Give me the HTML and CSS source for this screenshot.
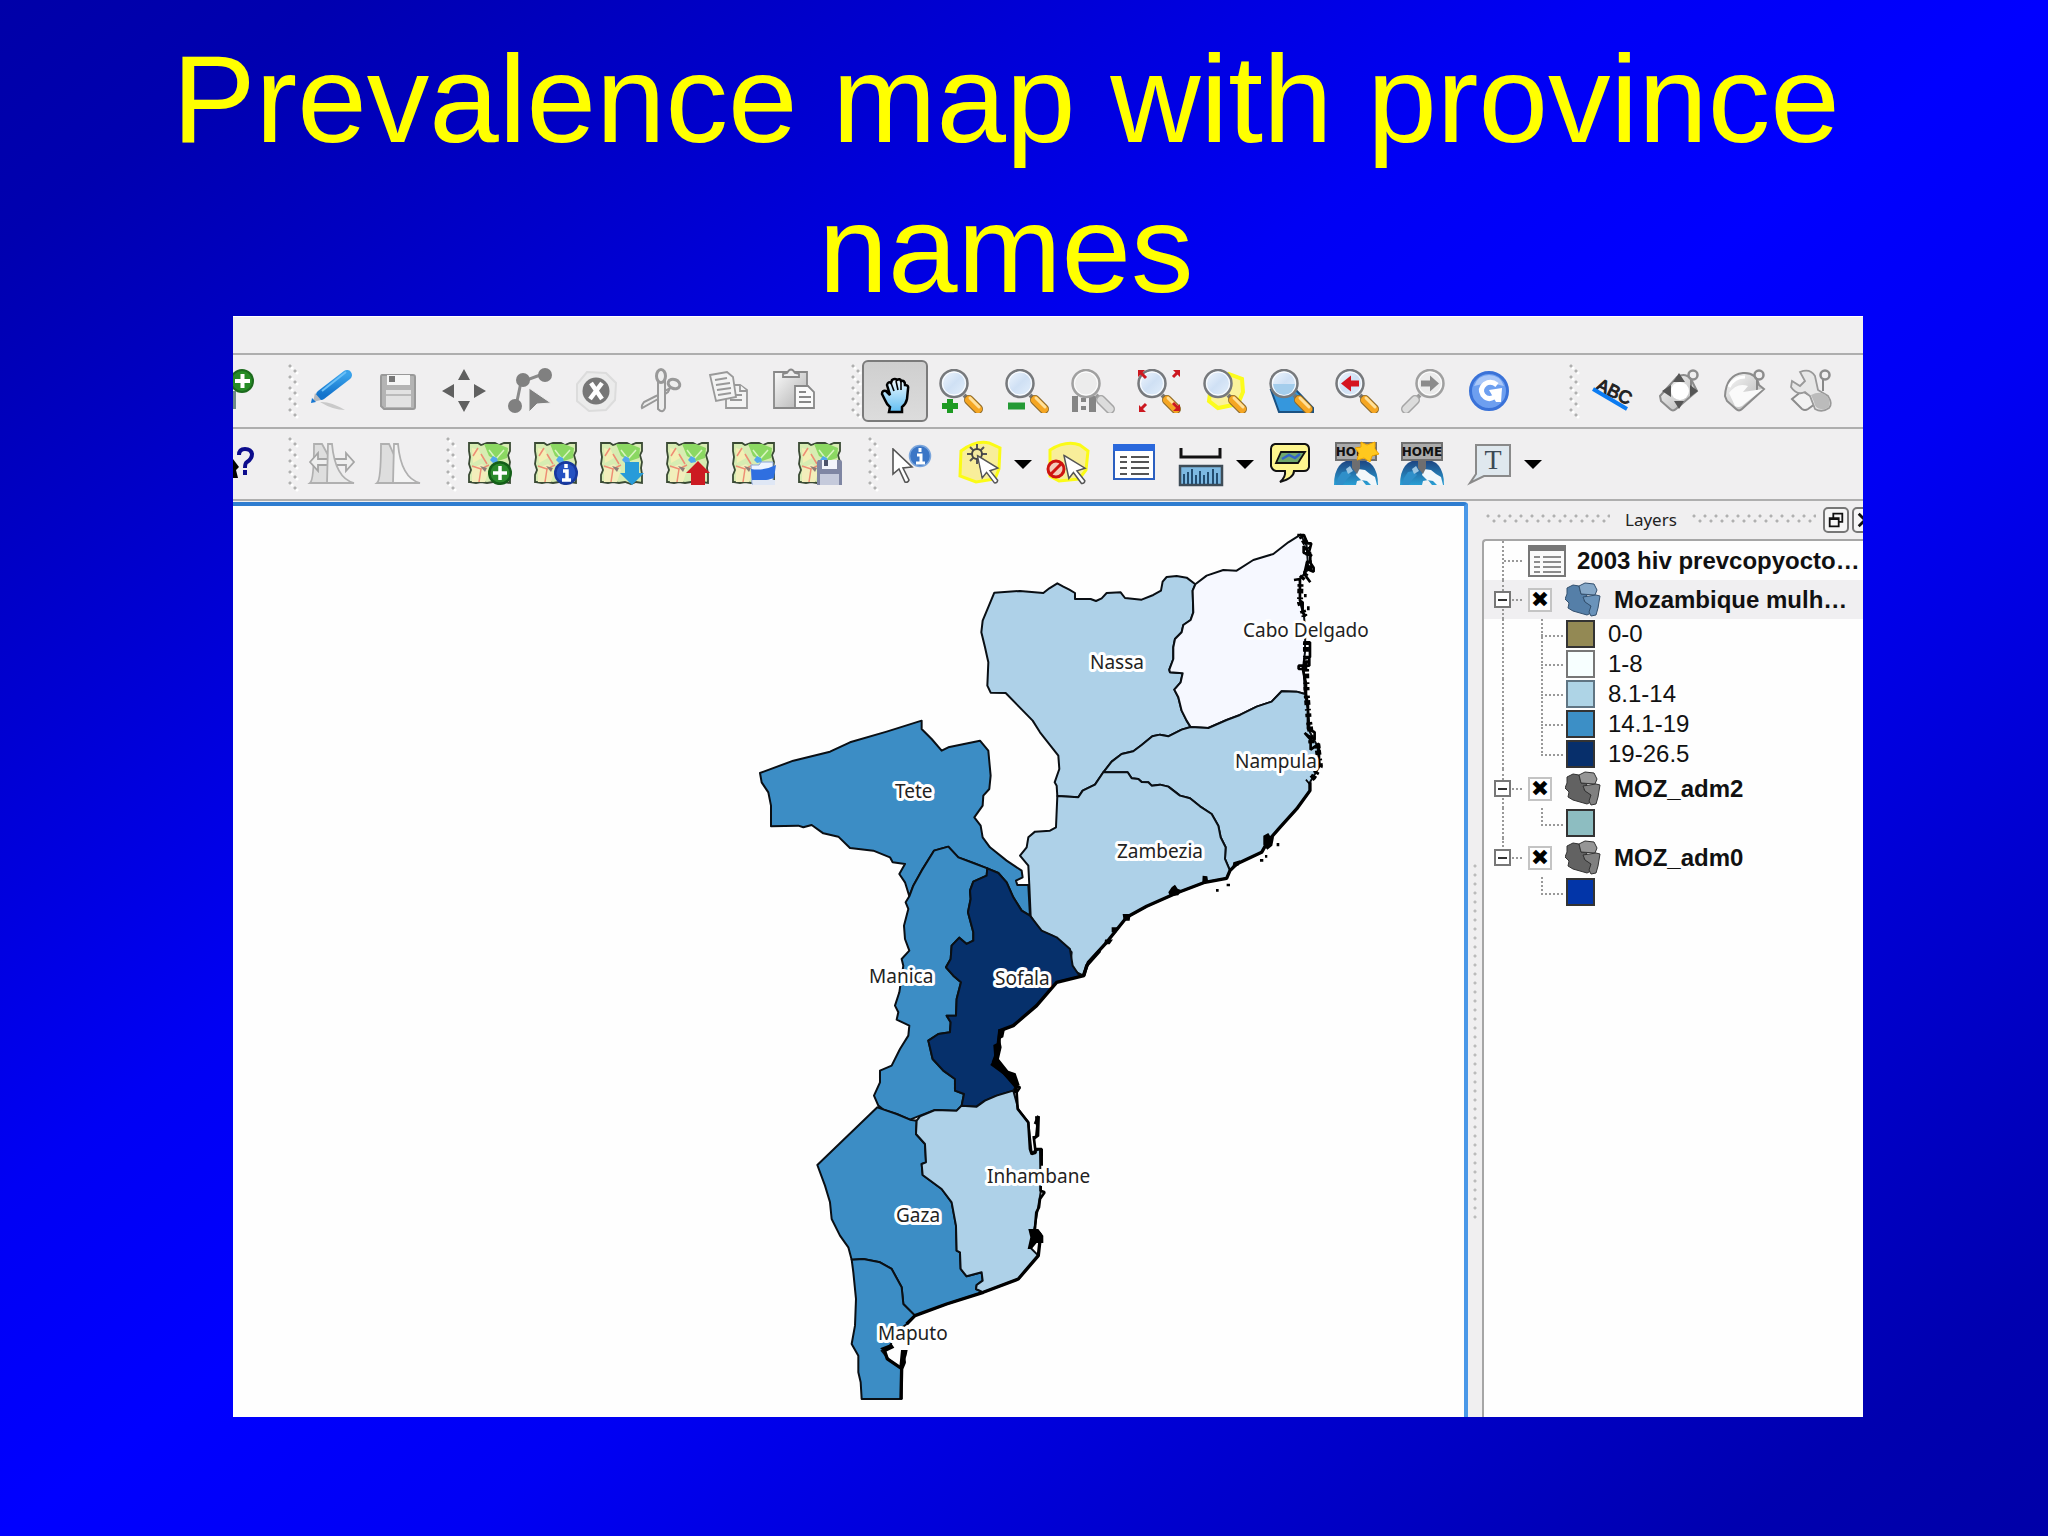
FILE: index.html
```html
<!DOCTYPE html>
<html lang="en">
<head>
<meta charset="utf-8">
<title>Prevalence map with province names</title>
<link rel="stylesheet" href="styles.css">
</head>
<body>
<svg class="defs" aria-hidden="true">
  <defs>
    <linearGradient id="lens" x1="0" y1="0" x2="1" y2="1"><stop offset="0" stop-color="#f4f9ff"/><stop offset=".5" stop-color="#cfe0f4"/><stop offset="1" stop-color="#e6f1fc"/></linearGradient>
    <linearGradient id="grayfill" x1="0" y1="0" x2="1" y2="1"><stop offset="0" stop-color="#fafafa"/><stop offset="1" stop-color="#b0b0b0"/></linearGradient>
    <linearGradient id="bluefill" x1="0" y1="0" x2="0" y2="1"><stop offset="0" stop-color="#3aa2ea"/><stop offset="1" stop-color="#1273cc"/></linearGradient>
    <linearGradient id="handfill" x1="0" y1="0" x2="0" y2="1"><stop offset="0" stop-color="#f2fbff"/><stop offset="1" stop-color="#5fbdf2"/></linearGradient>
    <linearGradient id="globe" x1="0" y1="0" x2="0" y2="1"><stop offset="0" stop-color="#1c3f7c"/><stop offset="1" stop-color="#2a9fd4"/></linearGradient>
    <symbol id="lensbody" viewBox="0 0 44 44">
      <path d="M25 26l4 4" stroke="#777" stroke-width="4"/>
      <path d="M30 31l9 9" stroke="#8c6a2c" stroke-width="10" stroke-linecap="round"/>
      <path d="M30 31l9 9" stroke="#f5a623" stroke-width="8" stroke-linecap="round"/>
      <path d="M31 29l9 9" stroke="#ffe09a" stroke-width="3" stroke-linecap="round"/>
      <circle cx="15" cy="14.500" r="13.500" fill="url(#lens)" stroke="#77797c" stroke-width="2.500"/>
      <circle cx="15" cy="14.500" r="11.500" fill="none" stroke="#fff" stroke-width="1"/>
    </symbol>
    <symbol id="lensgray" viewBox="0 0 44 44">
      <path d="M25 26l4 4" stroke="#999" stroke-width="4"/>
      <path d="M30 31l9 9" stroke="#a5a5a5" stroke-width="10" stroke-linecap="round"/>
      <path d="M30 31l9 9" stroke="#dcdcdc" stroke-width="7" stroke-linecap="round"/>
      <circle cx="15" cy="14.500" r="13.500" fill="#ececec" stroke="#a0a0a0" stroke-width="2.500"/>
      <circle cx="15" cy="14.500" r="11.500" fill="none" stroke="#fff" stroke-width="1"/>
    </symbol>
    <symbol id="mapsheet" viewBox="0 0 44 44">
      <path d="M1 1h9l3 2 6-2h8l4 2 5-2h6v8l-2 4 2 7-1 6 1 6v9l-6-1-5 2-6-2-6 1-6-1-5 1-6-1H1v-7l2-5-2-6 1-7-1-6z" fill="#d7ecb2" stroke="#3a4a34" stroke-width="1.800"/>
      <path d="M16 2h14l10 4-1 10-9 3-9-5z" fill="#8bd862"/>
      <path d="M4 6l7 2 3 8-9 5z" fill="#f3efb4"/><path d="M4 26l10-4 7 6-4 12H4z" fill="#f2eebb"/>
      <path d="M5 14l5-8M4 24l9 3 8-4M13 27l-2 13M13 12l6 10" stroke="#ee8d74" stroke-width="1.500" fill="none"/>
      <path d="M14 26l6 4M21 8l7 9M28 17l8-9" stroke="#d8f5c0" stroke-width="1.500" fill="none"/>
      <path d="M22 18l3-4 4 2 1 4-5 1z" fill="#52a8ee"/><path d="M12 24l7 2-2 4z" fill="#8e7b76"/>
    </symbol>
    <symbol id="pointer" viewBox="0 0 24 36">
      <path d="M1 1v25l6-5 6 13q3 1 4-2l-6-12 9-1z" fill="#fff" stroke="#555" stroke-width="1.600"/>
    </symbol>
    <symbol id="homeglobe" viewBox="0 0 44 44">
      <path d="M0 43Q0 17 22 17t22 26z" fill="url(#globe)"/>
      <path d="M4 36l4-6 6-1 3 4-5 5-3 5H2z" fill="#2f8fc9"/>
      <path d="M24 27l7 1 5 4 5 3 2 8h-6l-4-4-6-1-5-5z" fill="#f2f7fa"/>
      <path d="M22 43l1-4 5-1 4 5z" fill="#f2f2f2"/><path d="M12 27l4-3 3 5-5 3z" fill="#9cc6e2"/>
      <path d="M18 16h8v10l-3 6-5-6z" fill="#6e6e70"/>
      <rect x="2" y="1" width="40" height="17" fill="#ababab" stroke="#707070" stroke-width="2"/>
      <text x="22" y="14" text-anchor="middle" class="home-text">HOME</text>
    </symbol>
    <symbol id="tagring" viewBox="0 0 44 44">
      <path d="M34 10v12" stroke="#888" stroke-width="2"/>
      <circle cx="36" cy="6" r="4.500" fill="none" stroke="#8c8c8c" stroke-width="2.500"/>
    </symbol>
    <symbol id="africa" viewBox="0 0 36 36">
      <path d="M2 6l6-3 6 1 2 8 6 1-3 6 7 5v7l-4 2-14-4-5-3 1-5-4-4 2-5z" class="part-a"/>
      <path d="M14 4l6-3 9 1 3 6-2 5-14-1z" class="part-b"/>
      <path d="M18 15l13-2 4 1-2 12-2 7-5 1-2-4 2-6-6-4z" class="part-c"/>
    </symbol>
  </defs>
</svg>

<main class="slide">
  <h1 class="slide-title">Prevalence map with province names</h1>

  <section class="app" aria-label="Map application">
    <div class="menu-strip"></div>

    <div class="toolbar" role="toolbar" aria-label="Editing and navigation">
      <button class="tool tool-cut" aria-label="Add layer"><svg viewBox="0 0 22 44"><path d="M0 22h3v18H0z" fill="#6f8c87"/><circle cx="9" cy="12" r="12" fill="#1c6a1d"/><circle cx="9" cy="12" r="10" fill="#268c26"/><path d="M2 12h15M9.500 5v14" stroke="#fff" stroke-width="4"/></svg></button>
      <span class="grip"></span>
      <button class="tool" aria-label="Toggle editing"><svg viewBox="0 0 44 44"><path d="M10 33q10-1 25 8-12 0-25-8z" fill="#c9c9c9"/><path d="M11 26L37 6" stroke="url(#bluefill)" stroke-width="10" stroke-linecap="round"/><path d="M12 22L36 3" stroke="#6cc0f7" stroke-width="2"/><path d="M5 24l6 7-8 2z" fill="#b4b8bd"/><path d="M2 29l4 4-5 1z" fill="#1677d2"/></svg></button>
      <button class="tool" aria-label="Save edits"><svg viewBox="0 0 44 44"><path d="M6 6h31q2 0 2 2v30q0 2-2 2H8l-3-3V8q0-2 1-2z" fill="#b4b4b4" stroke="#999" stroke-width="2"/><path d="M11 6h23v10H11z" fill="#f6f6f6"/><path d="M13 7h6v6h-6z" fill="#777"/><path d="M10 21h25v17H10z" fill="#e2e2e2"/><path d="M10 26h25" stroke="#bbb" stroke-width="2"/></svg></button>
      <button class="tool" aria-label="Move feature"><svg viewBox="0 0 44 44" fill="#606060"><path d="M22 0l6 11H16zM22 43l6-11H16zM0 22l12-7v14zM44 22l-12-7v14z"/></svg></button>
      <button class="tool" aria-label="Node tool"><svg viewBox="0 0 44 44" fill="#808080"><path d="M8 37l5-24 22-8" fill="none" stroke="#8a8a8a" stroke-width="3"/><circle cx="15" cy="11" r="7"/><circle cx="37" cy="6" r="7"/><circle cx="7" cy="37" r="7"/><path d="M21 19v24l8-8 14-1z" stroke="#eee"/></svg></button>
      <button class="tool" aria-label="Delete selected"><svg viewBox="0 0 44 44"><path d="M13 3l19 1 10 10-1 17-9 10-17 1L3 32V15z" fill="#ebebeb" stroke="#dcdcdc" stroke-width="2"/><circle cx="22" cy="22" r="13.500" fill="#777"/><path d="M17 14l11 16M28 14L16 30" stroke="#fff" stroke-width="4.500"/></svg></button>
      <button class="tool" aria-label="Cut features"><svg viewBox="0 0 44 44" stroke="#999" stroke-width="2"><path d="M30 19L16 27 4 33q-3 4-2 6l16-9 10-7z" fill="#ededed"/><path d="M18 12h7v27q-2 6-7 1z" fill="#ededed"/><ellipse cx="21" cy="7" rx="4.500" ry="6.500" fill="#eee" stroke-width="3"/><ellipse cx="34" cy="15" rx="6" ry="4.500" fill="#eee" stroke-width="3" transform="rotate(20 34 15)"/></svg></button>
      <button class="tool" aria-label="Copy features"><svg viewBox="0 0 44 44" fill="#f3f3f3" stroke="#999" stroke-width="1.800"><path d="M20 16h14l7 5v18H20z" fill="#f3f3f3"/><path d="M34 16v6h7M24 26h12M24 31h12"/><path d="M4 6l17-3 6 5 3 20-20 4z" fill="#f3f3f3"/><path d="M9 11l12-2M10 16l14-2M11 21l14-2M12 26l13-2"/></svg></button>
      <button class="tool" aria-label="Paste features"><svg viewBox="0 0 44 44" stroke="#888" stroke-width="1.800"><path d="M2 3h33v36H2z" fill="url(#grayfill)"/><path d="M11 8V5l4-1q4-7 8 0l4 1v3z" fill="#eee"/><path d="M23 17h13l6 6v16H23z" fill="#fafafa"/><path d="M27 23h7M27 28h12M27 33h12" fill="none"/></svg></button>
      <span class="grip grip-far"></span>
      <button class="tool tool-active" aria-label="Pan map" aria-pressed="true"><svg viewBox="0 0 44 44"><path d="M16 43l1-5q-3-2-5-7l-3-6q0-4 4-3l4 4-3-10q1-4 4-2l1-3q3-2 5 0 3-2 4 1 4-1 4 4 4 0 3 4l-1 10q-1 5-5 8v5z" fill="url(#handfill)" stroke="#000" stroke-width="2.500"/><path d="M18 14l3 8M23 12l2 9M28 13v8" stroke="#000" stroke-width="1.600"/></svg></button>
      <button class="tool" aria-label="Zoom in"><svg viewBox="0 0 44 44"><use href="#lensbody"/><path d="M11 30v14M3 37h16" stroke="#1d9a22" stroke-width="6"/></svg></button>
      <button class="tool" aria-label="Zoom out"><svg viewBox="0 0 44 44"><use href="#lensbody"/><path d="M3 37h17" stroke="#249a35" stroke-width="7"/></svg></button>
      <button class="tool" aria-label="Zoom to native resolution"><svg viewBox="0 0 44 44"><path d="M1 27h6v16H1zM18 27h7v16h-7zM10 29h5v4h-5zM10 37h5v4h-5z" fill="#858585"/><use href="#lensgray"/></svg></button>
      <button class="tool" aria-label="Zoom full"><svg viewBox="0 0 44 44"><use href="#lensbody"/><path d="M3 3l6 6M42 2l-6 6M3 41l6-6M36 34l6 6" stroke="#cc1820" stroke-width="3"/><path d="M1 1h7l-7 7zM43 1v7l-7-7zM2 43v-7l7 7zM43 42h-7l7-7z" fill="#cc1820"/></svg></button>
      <button class="tool" aria-label="Zoom to selection"><svg viewBox="0 0 44 44"><path d="M26 5l13 5 1 13-5 12-20 4-9-7 1-8z" fill="#fbf29c" stroke="#fcfc1c" stroke-width="4"/><use href="#lensbody"/></svg></button>
      <button class="tool" aria-label="Zoom to layer"><svg viewBox="0 0 44 44"><path d="M2 21l8 22h34V39L26 20z" fill="#3597dd" stroke="#1a5182" stroke-width="2"/><use href="#lensbody"/><path d="M4 15h22q-1 10-11 11Q5 25 4 15z" fill="#a4cdec"/></svg></button>
      <button class="tool" aria-label="Zoom last"><svg viewBox="0 0 44 44"><use href="#lensbody"/><path d="M6 14.500l10-8v5h8v6h-8v5z" fill="#d51320"/></svg></button>
      <button class="tool" aria-label="Zoom next"><svg viewBox="0 0 44 44"><g transform="matrix(-1 0 0 1 44 0)"><use href="#lensgray"/></g><path d="M38 14.500l-9-8v5h-9v6h9v5z" fill="#8b8b8b"/></svg></button>
      <button class="tool" aria-label="Refresh"><svg viewBox="0 0 44 44"><circle cx="22" cy="22" r="18.500" fill="#6d9ff0" stroke="#3a72d8" stroke-width="3"/><path d="M7 17q4-11 15-11t15 11q-15-5-30 0z" fill="#a9c7f8"/><path d="M30 16q-6-5-12-1-6 5-2 11 5 6 11 2" fill="none" stroke="#fff" stroke-width="5"/><path d="M22 21l13-2-1 14h-5z" fill="#fff"/></svg></button>
      <span class="grip grip-wide"></span>
      <button class="tool" aria-label="Labeling"><svg viewBox="0 0 44 44"><text x="4" y="20" class="abc-text" transform="rotate(26 4 20)">ABC</text><path d="M2 20l34 20" stroke="#0c7cf2" stroke-width="4"/></svg></button>
      <button class="tool" aria-label="Move label"><svg viewBox="0 0 44 44"><path d="M3 27L20 8q8-5 14 2l6 12-21 18q-3 3-6 0L4 32z" fill="url(#grayfill)" stroke="#8c8c8c" stroke-width="2"/><use href="#tagring"/><circle cx="23" cy="22" r="9" fill="#fff"/><path d="M22 4l6 9H16zM22 40l5-8H17zM5 22l9-6v12zM41 22l-8-6v12z" fill="#555"/></svg></button>
      <button class="tool" aria-label="Rotate label"><svg viewBox="0 0 44 44"><path d="M2 27Q3 6 20 4q13-1 16 12l5 4-22 20q-3 3-6 0L4 32z" fill="url(#grayfill)" stroke="#8c8c8c" stroke-width="2"/><use href="#tagring"/><path d="M6 24q8-11 19-7l-5 6 20-3-21 17q-4 2-7 0z" fill="#fafafa"/><path d="M6 18q5-10 16-10" fill="none" stroke="#fff" stroke-width="3"/></svg></button>
      <button class="tool" aria-label="Change label"><svg viewBox="0 0 44 44"><path d="M3 30l10-8 17 10-11 8q-3 2-6 0z" fill="#f2f2f2" stroke="#8c8c8c" stroke-width="2"/><use href="#tagring"/><path d="M11 3q10-4 15 4l3 14 10 6q5 8 1 12-7 5-14 1l-5-13-5-4Q8 27 2 18l1-6 8 5 5-5z" fill="#e7e7e7" stroke="#999" stroke-width="1.800"/><path d="M22 26q12-6 18 4 3 11-8 10-6 0-7-7z" fill="#bbb"/></svg></button>
    </div>

    <div class="toolbar toolbar-low" role="toolbar" aria-label="Layers and attributes">
      <button class="tool tool-cut" aria-label="What's this?"><svg viewBox="0 0 22 44"><path d="M0 17l6 8-3 3 2 8H0z" fill="#000"/><path d="M6 13q0-6 6-6t7 5q0 5-5 8-2 1-2 6M12 28v5" fill="none" stroke="#0c0c8c" stroke-width="4"/></svg></button>
      <span class="grip"></span>
      <button class="tool" aria-label="Stretch histogram"><svg viewBox="0 0 44 44" stroke="#b0b0b0" stroke-width="1.800"><path d="M0 41q4-3 4-39h8l6 11V41z" fill="#dedede"/><path d="M0 20l8-9v6h28v-6l8 9-8 9v-6H8v6z" fill="#efefef" stroke="#a5a5a5"/><path d="M17 41l1-39h4q3 34 22 39z" fill="#ebebeb"/></svg></button>
      <button class="tool" aria-label="Full histogram"><svg viewBox="0 0 44 44" stroke="#b0b0b0" stroke-width="1.800"><path d="M1 41q4-3 4-39h8l5 11V41z" fill="#dedede"/><path d="M17 41l1-39h4q3 34 22 39z" fill="#f4f4f4"/></svg></button>
      <span class="grip grip-near"></span>
      <button class="tool" aria-label="New map view"><svg viewBox="0 0 44 44"><use href="#mapsheet"/><circle cx="32" cy="31" r="12" fill="#145f18"/><circle cx="32" cy="31" r="9.500" fill="#2a8a2a"/><path d="M25 31h14M32 24v14" stroke="#fff" stroke-width="3.500"/></svg></button>
      <button class="tool" aria-label="Map information"><svg viewBox="0 0 44 44"><use href="#mapsheet"/><circle cx="32" cy="31" r="12" fill="#17379d"/><circle cx="32" cy="31" r="9.500" fill="#2551c2"/><path d="M32 22v4M29 29h4v9M28 38h9" stroke="#fff" stroke-width="3.500" fill="none"/></svg></button>
      <button class="tool" aria-label="Download map"><svg viewBox="0 0 44 44"><use href="#mapsheet"/><path d="M25 20h14v11h5L32 43 20 31h5z" fill="#279bd9"/></svg></button>
      <button class="tool" aria-label="Upload map"><svg viewBox="0 0 44 44"><use href="#mapsheet"/><path d="M25 43h14V31h5L32 19 20 31h5z" fill="#cc1b22"/></svg></button>
      <button class="tool" aria-label="Open map"><svg viewBox="0 0 44 44"><use href="#mapsheet"/><path d="M19 23h8l2-3h12v22H20z" fill="#eef4ff" stroke="#8aa5da"/><path d="M19 27q13 2 25-4l-2 13q-10 4-22 2z" fill="#2f6fe0"/><path d="M21 38h22v5H21z" fill="#dfe7f5"/></svg></button>
      <button class="tool" aria-label="Save map"><svg viewBox="0 0 44 44"><use href="#mapsheet"/><path d="M20 18h22q2 0 2 2v23H19V20z" fill="#7f86a3"/><path d="M24 18h15v9H24z" fill="#f2f4fb"/><path d="M26 18h4v6h-4z" fill="#4d536b"/><path d="M22 32h19v11H22z" fill="#c5cadb"/></svg></button>
      <span class="grip grip-near"></span>
      <button class="tool" aria-label="Identify features"><svg viewBox="0 0 44 44"><use href="#pointer" x="2" y="6" width="24" height="36"/><circle cx="30" cy="14" r="10.500" fill="#3b76c6" stroke="#7aa5dc" stroke-width="1.500"/><path d="M30 6v4M27 13h4v8M26 21h9" stroke="#fff" stroke-width="3" fill="none"/></svg></button>
      <button class="tool" aria-label="Select features"><svg viewBox="0 0 44 44"><path d="M5 9Q20-2 33 1l11 5-1 21-4 10-19 3-16-6z" fill="#f8ee9a" stroke="#fbfb16" stroke-width="3"/><path d="M21 2v20M11 12h20M14 5l14 14M28 5L14 19" stroke="#555" stroke-width="2"/><circle cx="21" cy="12" r="5" fill="#f3e9a0" stroke="#444" stroke-width="2"/><use href="#pointer" transform="rotate(-12 30 20)" x="22" y="11" width="22" height="33"/></svg></button>
      <button class="drop" aria-label="Selection options"></button>
      <button class="tool" aria-label="Deselect features"><svg viewBox="0 0 44 44"><path d="M4 8Q20-2 34 3l8 6-2 19-7 9-20 2-9-5z" fill="#f8ee9a" stroke="#fbfb16" stroke-width="3"/><use href="#pointer" transform="rotate(-12 30 20)" x="18" y="10" width="24" height="34"/><circle cx="10" cy="27" r="8" fill="#f3cdbb" stroke="#cf1410" stroke-width="3"/><path d="M5 32l11-11" stroke="#cf1410" stroke-width="3"/></svg></button>
      <button class="tool" aria-label="Open attribute table"><svg viewBox="0 0 44 44"><path d="M2 3h40v34H2z" fill="#fff" stroke="#2b5fc0" stroke-width="2"/><path d="M1 2h42v7H1z" fill="#2a68dc"/><path d="M8 15h7M8 20h7M8 26h7M8 32h7M19 15h18M19 20h18M19 26h18M19 32h18" stroke="#555" stroke-width="2"/></svg></button>
      <button class="tool" aria-label="Measure"><svg viewBox="0 0 44 44"><path d="M3 6v9h39V6" fill="none" stroke="#111" stroke-width="3"/><path d="M2 24h42v19H2z" fill="#7db9e2" stroke="#3e4c57" stroke-width="2.500"/><path d="M6 42V32M10 42V30M14 42V27M18 42V33M22 42V29M26 42V33M30 42V30M35 42V27M39 42V31" stroke="#234d70" stroke-width="2"/></svg></button>
      <button class="drop" aria-label="Measure options"></button>
      <button class="tool" aria-label="Map tips"><svg viewBox="0 0 44 44"><path d="M7 2h30q4 1 4 5v18q-1 4-5 4H26q0 7-14 11 6-5 5-11H8q-4-1-5-5V7q0-4 4-5z" fill="#fdf58e" stroke="#111" stroke-width="2"/><path d="M13 10h24l-7 11H8z" fill="#6fa76c" stroke="#111" stroke-width="1.800"/><path d="M14 17l7-4 6 3 5-4" stroke="#3265c8" stroke-width="2.500" fill="none"/></svg></button>
      <button class="tool" aria-label="New bookmark"><svg viewBox="0 0 44 44"><use href="#homeglobe"/><path d="M27 0l6 3 8-3v7l4 5-7 2-2 6-6-4-7 2 2-7-4-5 6-1z" fill="#ffc81e" stroke="#f0a400"/></svg></button>
      <button class="tool" aria-label="Show bookmarks"><svg viewBox="0 0 44 44"><use href="#homeglobe"/></svg></button>
      <button class="tool" aria-label="Text annotation"><svg viewBox="0 0 44 44"><path d="M10 3h34v31H18L4 41l6-9z" fill="#dfe8ee" stroke="#8a8a8a" stroke-width="2"/><text x="27" y="27" text-anchor="middle" class="note-text">T</text></svg></button>
      <button class="drop" aria-label="Annotation options"></button>
    </div>

    <div class="workspace">
      <div class="canvas">
        <svg class="map" viewBox="233 507 1231 911" role="img" aria-label="Map of Mozambique by province">
          <!-- northern provinces -->
          <g class="area" transform="translate(960 520) scale(.3333)">
            <path class="light" d="M103 221L180 216 250 222 268 208 292 193 310 203 328 212 345 222 345 240 392 240 408 246 425 238 440 222 482 220 495 237 545 242 580 228 603 215 608 188 620 174 650 171 680 176 706 196 698 215 700 280 692 303 670 318 665 340 645 360 640 385 640 420 628 452 630 460 668 463 662 490 643 512 655 535 665 575 680 605 692 624 665 632 625 652 600 647 577 652 545 678 520 697 485 705 455 728 430 760 405 797 368 815 355 835 292 831 290 800 284 790 298 750 295 710 240 640 218 605 137 522 92 521 82 500 85 430 75 385 64 340 68 305Z"/>
            <path class="pale" d="M706 196L740 170 790 153 830 155 880 123 940 105 985 70 1022 47 1040 80 1045 150 1020 180 1020 250 1032 290 1036 340 1035 400 1030 440 1035 525 1010 518 965 517 935 548 890 563 840 588 800 603 745 627 692 624 680 605 665 575 655 535 643 512 662 490 668 463 630 460 628 452 640 420 640 385 645 360 665 340 670 318 692 303 700 280 698 215Z"/>
            <path class="light" d="M692 624L745 627 800 603 840 588 890 563 935 548 965 517 1010 518 1035 525 1045 580 1050 640 1072 680 1080 740 1050 790 1050 815 1010 870 960 925 925 965 905 1000 830 1035 810 1055 795 1020 797 985 782 955 775 920 755 885 720 862 690 838 660 830 625 803 600 797 575 800 565 790 545 789 535 780 515 778 503 760 430 760 455 728 485 705 520 697 545 678 577 652 600 647 625 652 665 632Z"/>
            <path class="light" d="M292 831L355 835 368 815 405 797 430 760 503 760 515 778 535 780 545 789 565 790 575 800 600 797 625 803 660 830 690 838 720 862 755 885 775 920 782 955 797 985 795 1020 810 1055 800 1078 735 1090 650 1122 560 1162 500 1195 440 1270 385 1330 370 1370 340 1355 332 1330 335 1300 325 1290 280 1252 240 1235 212 1192 208 1100 205 1040 180 1010 200 985 205 955 225 938 270 935 288 925Z"/>
          </g>
          <!-- central provinces -->
          <g class="area" transform="translate(740 700) scale(.3333)">
            <path class="mid" d="M60 222L160 185 270 158 330 130 440 98 545 65 545 90 575 120 605 155 625 145 720 125 745 155 752 230 748 270 730 290 728 320 703 355 722 380 728 415 750 445 800 485 845 515 848 535 828 545 832 558 865 558 870 650 845 635 820 595 800 550 775 522 742 508 700 492 655 475 625 443 582 455 545 515 520 560 508 592 495 550 478 525 495 495 458 490 450 475 400 455 330 447 295 413 250 403 215 378 190 385 175 380 93 382 93 320 85 280 65 250Z"/>
            <path class="mid" d="M508 592L520 560 545 515 582 455 625 443 655 475 700 492 742 508 740 530 700 548 690 575 692 600 684 640 700 700 700 725 680 735 658 716 635 740 632 780 618 805 640 830 663 850 650 900 648 950 620 950 632 970 630 1000 595 1005 565 1025 578 1080 610 1115 645 1140 645 1175 672 1185 665 1220 650 1235 585 1233 540 1250 510 1262 470 1245 430 1232 415 1220 402 1190 420 1150 420 1115 455 1100 480 1050 505 1010 508 980 470 962 475 940 465 920 478 880 490 800 485 780 508 755 495 720 492 680 505 630 497 610Z"/>
            <path class="dark" d="M742 508L775 522 800 550 820 595 845 635 870 650 905 695 950 715 990 750 998 800 1015 825 1030 830 950 850 890 920 820 980 780 995 775 1050 760 1090 800 1130 830 1160 820 1175 770 1190 735 1205 710 1223 665 1220 672 1185 645 1175 645 1140 610 1115 578 1080 565 1025 595 1005 630 1000 632 970 620 950 648 950 650 900 663 850 640 830 618 805 632 780 635 740 658 716 680 735 700 725 700 700 684 640 692 600 690 575 700 548 740 530Z"/>
          </g>
          <!-- southern provinces -->
          <g class="area" transform="translate(800 1040) scale(.3333)">
            <path class="mid" d="M232 205L52 378 75 440 90 490 95 540 120 590 145 625 155 662 190 660 240 670 275 690 305 745 310 795 345 830 440 795 550 760 528 750 530 738 548 725 545 700 500 712 482 690 480 640 470 635 468 560 455 490 425 450 368 408 365 375 378 370 375 315 348 285 350 245 330 242 290 225Z"/>
            <path class="light" d="M350 245L360 232 405 213 470 215 485 200 530 203 555 185 590 170 640 155 655 210 685 250 695 340 720 330 722 460 705 560 690 625 715 650 655 720 550 760 528 750 530 738 548 725 545 700 500 712 482 690 480 640 470 635 468 560 455 490 425 450 368 408 365 375 378 370 375 315 348 285Z"/>
            <path class="mid" d="M155 662L190 660 240 670 275 690 305 745 310 795 345 830 320 855 290 880 270 920 245 935 265 960 305 990 305 1080 185 1080 182 1030 175 1000 175 950 155 915 165 860 168 780 160 700Z"/>
          </g>
          <!-- coastline -->
          <g class="coast">
            <g transform="translate(960 520) scale(.3333)">
              <path d="M1012 48h20l10 25h12l-8 30 10 8-25-10v-20l20 25v25l10 15v12l-20-8v-20l-8 35 18 25M1020 180l-18 3M1020 180v65l8 5v30l10 12M1036 225v10M1045 262v12M1030 370h20v45l-20 5M1048 415v25h-32v10h22v-22l-10 20 10 45M1038 490v35l6 35v70l20 10v22l-20-12-10-8 18 20v30l25-18v70h-10"/>
              <path class="ragged" d="M1024 50L1044 85 1048 150 1022 182 1020 250 1034 292M1038 370V440L1040 525 1046 600 1052 640 1055 685M1072 680L1080 742 1060 775 1040 792"/>
              <path class="thick" d="M1050 790V815L1010 870 960 925 925 965 905 1000 830 1035 810 1055 800 1078 735 1090 650 1122 560 1162 500 1195 440 1270 385 1330 370 1370"/>
              <path class="blob" d="M910 950l15-8 5 8 12 5-5 25-15 12-12-15zM635 1105l10-8 8 12 12 5-10 15-25 3-5-12zM488 1185h24l-3 20h-18zM455 1225h20l-5 15h-15zM728 1070l14 2 3 18h-18zM820 1030l20-6-3 15-20 8zM950 972h8v10h-8zM900 1020h10v8h-10zM800 1094h10v8h-10zM768 1110h8v8h-8zM915 1008h7v8h-7zM435 1262h24l-10 14h-16z"/>
            </g>
            <g transform="translate(740 700) scale(.3333)">
              <path class="thick" d="M1080 755l-40 45-8 30-82 20-60 70-70 60-40 15-5 55-15 40 40 40 30 30-4 22"/>
              <path class="blob" d="M775 990h20l-5 25-10 5 5 25-8 35 28 35 22 8 12 35-15 8-35-40-38-28 12-20-3-40 10-5z"/>
            </g>
            <g transform="translate(800 1040) scale(.3333)">
              <path d="M645 140l15 5-10 15 3 50 32 40 5 80 5 15 12-4-6-50M705 255l10-25M707 330h18v50M722 440v15l12 5-14 20-3 25-8 15-5 60"/>
              <path class="thick" d="M705 575l15 10v20l-5 45-60 70-105 40-110 35-95 35-25 25M252 930l10 30 42 28M308 935l5 35-8 20-2 90"/>
              <path class="blob" d="M685 570h30l15 20v22h-20l-15 18h-12l8-35zM705 232h15l-2 60-14 10 4-40zM240 928l35-14 8 12-25 12zM303 933h20l-3 15-12 38-10-2z"/>
            </g>
          </g>
          <g class="labels">
            <text x="895" y="799">Tete</text>
            <text x="869" y="984">Manica</text>
            <text x="995" y="986">Sofala</text>
            <text x="1090" y="670">Nassa</text>
            <text x="1243" y="638">Cabo Delgado</text>
            <text x="1235" y="769">Nampula</text>
            <text x="1117" y="859">Zambezia</text>
            <text x="987" y="1184">Inhambane</text>
            <text x="896" y="1223">Gaza</text>
            <text x="878" y="1341">Maputo</text>
          </g>
        </svg>
      </div>
      <div class="splitter"></div>
      <aside class="layers">
        <header class="layers-head">
          <span class="dots"></span>
          <h2 class="layers-title">Layers</h2>
          <span class="dots"></span>
          <button class="dock" aria-label="Float panel"><svg viewBox="0 0 20 20" fill="none" stroke="#111" stroke-width="2"><path d="M7 8V3h10v9h-4M6 3h12"/><path d="M3 8h10v9H3zM2 9h12"/></svg></button>
          <button class="dock" aria-label="Close panel"><svg viewBox="0 0 20 20" stroke="#111" stroke-width="3"><path d="M3 3l14 14M17 3L3 17"/></svg></button>
        </header>
        <ul class="tree">
          <li class="layer plain">
            <svg class="table-icon" viewBox="0 0 38 32"><path d="M1 1h36v30H1z" fill="#fafafa" stroke="#777" stroke-width="2"/><path d="M1 1h36v5H1z" fill="#777"/><path d="M6 12h6M6 17h6M6 22h6M6 27h6M15 12h18M15 17h18M15 22h18M15 27h18" stroke="#8c8c8c" stroke-width="2"/></svg>
            <span class="name">2003 hiv prevcopyocto…</span>
          </li>
          <li class="layer selected">
            <button class="fold" aria-label="Collapse"></button>
            <input class="tick" type="checkbox" id="l1" checked>
            <svg class="shape blue" viewBox="0 0 36 36"><use href="#africa"/></svg>
            <label class="name" for="l1">Mozambique mulh…</label>
          </li>
          <li class="class"><i class="swatch s1"></i>0-0</li>
          <li class="class"><i class="swatch s2"></i>1-8</li>
          <li class="class"><i class="swatch s3"></i>8.1-14</li>
          <li class="class"><i class="swatch s4"></i>14.1-19</li>
          <li class="class"><i class="swatch s5"></i>19-26.5</li>
          <li class="layer">
            <button class="fold" aria-label="Collapse"></button>
            <input class="tick" type="checkbox" id="l2" checked>
            <svg class="shape" viewBox="0 0 36 36"><use href="#africa"/></svg>
            <label class="name" for="l2">MOZ_adm2</label>
          </li>
          <li class="class"><i class="swatch s6"></i></li>
          <li class="layer end">
            <button class="fold" aria-label="Collapse"></button>
            <input class="tick" type="checkbox" id="l3" checked>
            <svg class="shape" viewBox="0 0 36 36"><use href="#africa"/></svg>
            <label class="name" for="l3">MOZ_adm0</label>
          </li>
          <li class="class end"><i class="swatch s7"></i></li>
        </ul>
      </aside>
    </div>
  </section>
</main>
</body>
</html>
```

FILE: styles.css
```css
* { box-sizing: border-box; }

body { margin: 0; }

button { appearance: none; margin: 0; padding: 0; border: 0; background: none; }

.defs { position: absolute; width: 0; height: 0; }

.slide {
  display: flex;
  flex-direction: column;
  min-height: 100vh;
  padding: 24px 185px 119px 233px;
  background: linear-gradient(to bottom right, #0000a8 0%, #0000b0 8%, #0000d2 24%, #0000f4 39%, #0000ff 50%, #0000f4 61%, #0000d2 76%, #0000b0 92%, #0000a8 100%);
}

.slide-title {
  margin: 0 -83px -8px -167px;
  color: #ffff00;
  font: 400 125px/150px "Liberation Sans", Arial, sans-serif;
  text-align: center;
}

/* application window */
.app {
  display: flex;
  flex: 1;
  flex-direction: column;
  overflow: hidden;
  background: #f0eff0;
}

.menu-strip { height: 37px; border-top: 1px solid #fff; }

.toolbar {
  display: flex;
  align-items: center;
  height: 74px;
  border-top: 2px solid #aeaeae;
  overflow: hidden;
}

.toolbar-low { height: 72px; }

.tool {
  display: flex;
  flex: none;
  align-items: center;
  justify-content: center;
  width: 66px;
  height: 62px;
}

.tool svg { display: block; width: 44px; height: 44px; overflow: visible; }
.tool svg:not([fill]) { fill: none; }

.tool-cut { justify-content: flex-start; width: 22px; }
.tool-cut svg { width: 22px; }

.tool-active {
  border: 2px solid #7b7b7b;
  border-radius: 6px;
  background: linear-gradient(#cfcfcf, #dcdcdc);
}

.grip {
  flex: none;
  width: 11px;
  height: 55px;
  margin-left: 33px;
  background:
    radial-gradient(circle at 2px 2px, #b0b0b0 1px, transparent 2px) 0 0 / 11px 11px,
    radial-gradient(circle at 4px 4px, #fff 1px, transparent 2px) 0 0 / 11px 11px,
    radial-gradient(circle at 7px 7px, #b0b0b0 1px, transparent 2px) 0 0 / 11px 11px,
    radial-gradient(circle at 9px 9px, #fff 1px, transparent 2px) 0 0 / 11px 11px;
}

.grip-far { margin-left: 24px; }
.grip-wide { margin-left: 47px; }
.grip-near { margin-left: 15px; }

.drop { flex: none; width: 24px; height: 40px; }
.drop::before {
  content: "";
  display: block;
  margin: 0 auto;
  width: 0;
  border: 9px solid transparent;
  border-top-color: #000;
  border-bottom-width: 0;
}

.home-text { fill: #111; font: 700 12px "DejaVu Sans", sans-serif; }
.abc-text { fill: #222; stroke: #222; font: 400 18px "Liberation Sans", sans-serif; }
.note-text { fill: #3c4a55; font: 400 28px "Liberation Serif", serif; }

/* map and layer panel */
.workspace {
  display: flex;
  flex: 1;
  padding-top: 1px;
  border-top: 2px solid #aeaeae;
}

.canvas {
  flex: 1;
  min-width: 0;
  border: solid #4a98e8;
  border-width: 4px 4px 0 0;
  border-top-color: #2f7dd0;
  border-top-right-radius: 4px;
  background: #fefefe;
}

.map { display: block; width: 100%; height: 100%; }

.area path { stroke: #0a0f14; stroke-width: 6; stroke-linejoin: round; }
.light { fill: #aed1e8; }
.pale { fill: #f6f8ff; }
.mid { fill: #3c8dc5; }
.dark { fill: #06306b; }

.coast path { fill: none; stroke: #000; stroke-width: 8; stroke-linejoin: bevel; }
.coast .thick { stroke-width: 10; }
.coast .ragged { stroke-width: 18; stroke-dasharray: 8 6 14 12 5 9 10 16; }
.coast .blob { fill: #000; stroke: none; }

.labels text {
  fill: #222;
  stroke: #fff;
  stroke-width: 6px;
  stroke-linejoin: round;
  paint-order: stroke;
  font: 400 19px "Noto Sans", Tahoma, sans-serif;
}

.splitter {
  width: 14px;
  padding: 360px 0 196px;
  background: radial-gradient(circle at 7px 4px, #bbb 1px, transparent 2px) 0 360px / 14px 9px repeat-y;
  background-clip: content-box;
}

.layers { display: flex; flex-direction: column; width: 381px; overflow: hidden; }

.layers-head {
  display: flex;
  align-items: center;
  width: 400px;
  height: 37px;
  padding: 0 0 2px 4px;
}

.dots {
  width: 124px;
  height: 11px;
  background:
    radial-gradient(circle at 2px 2px, #b0b0b0 1px, transparent 2px) 0 0 / 11px 11px,
    radial-gradient(circle at 8px 7px, #b0b0b0 1px, transparent 2px) 0 0 / 11px 11px;
}

.layers-title {
  margin: 0 15px;
  color: #222;
  font: 400 17px/24px "Noto Sans", Tahoma, sans-serif;
}

.dock {
  width: 26px;
  height: 26px;
  margin-left: 3px;
  padding: 2px;
  border: 2px solid #777;
  border-radius: 5px;
  background: #f6f6f6;
}
.layers-title + .dots + .dock { margin-left: 7px; }
.dock svg { display: block; width: 18px; height: 18px; }

.tree {
  flex: 1;
  margin: 0;
  padding: 0;
  border: solid #a6a6a6;
  border-width: 2px 0 0 2px;
  border-top-left-radius: 4px;
  background: #fefefe;
  color: #111;
  font: 400 24px/30px "Liberation Sans", Arial, sans-serif;
  list-style: none;
}

.layer, .class { position: relative; display: flex; align-items: center; white-space: nowrap; }
.layer { height: 39px; padding-left: 10px; font-weight: 700; }
.class { height: 30px; padding-left: 82px; }
.selected { background: #f0eff1; }
.plain { padding-left: 44px; }

/* dotted branch lines of the tree */
.layer::before, .class::before {
  content: "";
  position: absolute;
  top: 0;
  bottom: 0;
  left: 18px;
  border-left: 2px dotted #999;
}
.layer.end::before { bottom: 50%; }
.class.end::before { display: none; }
.layer::after {
  content: "";
  position: absolute;
  left: 20px;
  width: 18px;
  border-top: 2px dotted #999;
}
.class::after {
  content: "";
  position: absolute;
  top: -15px;
  left: 57px;
  width: 20px;
  height: 30px;
  border: dotted #999;
  border-width: 0 0 2px 2px;
}
.layer + .class::after { top: 0; height: 16px; }

.fold {
  position: relative;
  z-index: 1;
  width: 17px;
  height: 17px;
  border: 2px solid #777;
  background: #fff;
}
.fold::before { content: ""; display: block; width: 9px; margin: 0 auto; border-top: 2px solid #333; }

.tick {
  appearance: none;
  display: grid;
  place-items: center;
  width: 24px;
  height: 24px;
  margin: 0 0 0 17px;
  border: 2px solid #c4c4c4;
  background: #fff;
}
.tick:checked::before { content: "✖"; color: #000; font: 700 22px/20px "DejaVu Sans", sans-serif; }

.shape {
  --a: #626262;
  --b: #969696;
  --c: #808080;
  width: 36px;
  height: 36px;
  margin: 0 13px;
  stroke: #333;
  stroke-width: 1px;
}
.blue { --a: #557fa8; --b: #86a8c8; --c: #6a93ba; stroke: #33506e; }
.part-a { fill: var(--a); }
.part-b { fill: var(--b); }
.part-c { fill: var(--c); }

.table-icon { width: 38px; height: 32px; margin-right: 11px; }

.swatch { width: 29px; height: 28px; margin-right: 13px; border: 2px solid #333; }
.s1 { background: #938954; }
.s2 { background: #f7ffff; border-color: #777; }
.s3 { background: #aed4e6; border-color: #607583; }
.s4 { background: #3c8fc6; }
.s5 { background: #072f6b; }
.s6 { background: #8dbdc1; }
.s7 { background: #0235a8; }
```
